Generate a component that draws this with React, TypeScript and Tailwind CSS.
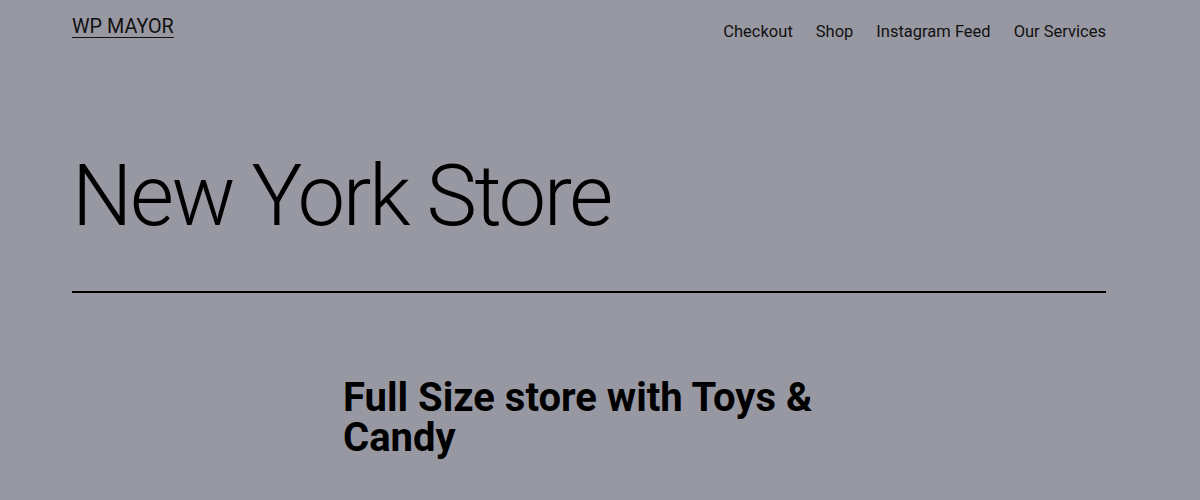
export default function App() {
  return (
    <div className="min-h-[500px] bg-[#9898a3] text-black font-['Roboto','Liberation_Sans',sans-serif]">
      <div className="ml-[72px] w-[1034px]">
        <header className="flex items-start justify-between pt-[14px]">
          <a href="#" className="text-[19.8px] leading-[26px] underline decoration-1 underline-offset-[4px] text-[#111]">
            WP MAYOR
          </a>
          <nav className="flex gap-[23px] pt-[6px] text-[16.5px] leading-[24px] text-[#111]">
            <a href="#">Checkout</a>
            <a href="#">Shop</a>
            <a href="#">Instagram Feed</a>
            <a href="#">Our Services</a>
          </nav>
        </header>
        <h1 className="mt-[110px] text-[85px] font-light leading-[1] tracking-[-2.4px]">
          New York Store
        </h1>
        <hr className="mt-[52px] border-t-2 border-black" />
      </div>
      <div className="ml-[343px] mt-[85px] w-[530px]">
        <h2 className="text-[40px] font-bold leading-[40px]">
          Full Size store with Toys &amp; Candy
        </h2>
      </div>
    </div>
  );
}
